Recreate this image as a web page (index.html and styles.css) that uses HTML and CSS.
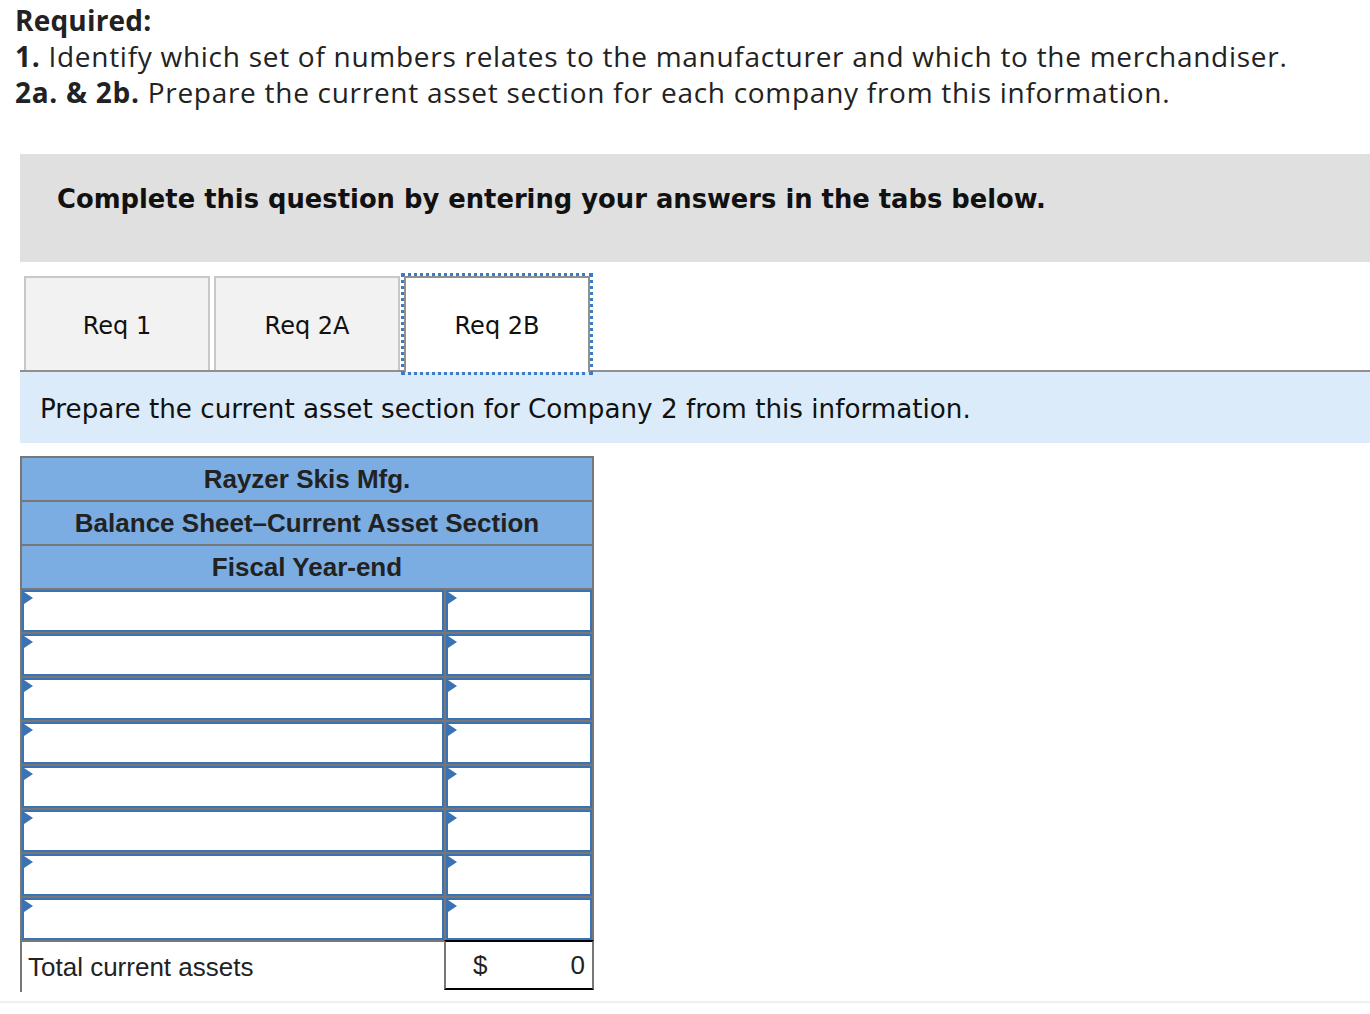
FILE: index.html
```html
<!DOCTYPE html>
<html lang="en">
<head>
<meta charset="utf-8">
<title>Required</title>
<link rel="stylesheet" href="styles.css">
</head>
<body>
<div class="required">
  <div class="req-title">Required:</div>
  <div class="req-line"><b>1.</b> Identify which set of numbers relates to the manufacturer and which to the merchandiser.</div>
  <div class="req-line"><b>2a. &amp; 2b.</b> Prepare the current asset section for each company from this information.</div>
</div>

<div class="instructions">Complete this question by entering your answers in the tabs below.</div>

<div class="tabs">
  <div class="tab">Req 1</div>
  <div class="tab">Req 2A</div>
  <div class="tab tab-active">Req 2B</div>
</div>

<div class="panel">Prepare the current asset section for Company 2 from this information.</div>

<div class="sheet">
  <div class="sheet-head">
    <div class="head-row">Rayzer Skis Mfg.</div>
    <div class="head-row">Balance Sheet–Current Asset Section</div>
    <div class="head-row">Fiscal Year-end</div>
  </div>
  <div class="rows">
    <div class="row"><div class="field"></div><div class="field"></div></div>
    <div class="row"><div class="field"></div><div class="field"></div></div>
    <div class="row"><div class="field"></div><div class="field"></div></div>
    <div class="row"><div class="field"></div><div class="field"></div></div>
    <div class="row"><div class="field"></div><div class="field"></div></div>
    <div class="row"><div class="field"></div><div class="field"></div></div>
    <div class="row"><div class="field"></div><div class="field"></div></div>
    <div class="row"><div class="field"></div><div class="field"></div></div>
  </div>
  <div class="total-row">
    <div class="total-label">Total current assets</div>
    <div class="total-value"><span>$</span><span>0</span></div>
  </div>
</div>

<div class="footer-line"></div>
</body>
</html>
```
FILE: styles.css
```css
html, body {
  margin: 0;
  padding: 0;
  background: #ffffff;
}

body {
  width: 1370px;
  overflow: hidden;
}

.required {
  padding: 2px 0 0 15px;
  font-family: "Open Sans", "Liberation Sans", sans-serif;
  font-size: 28px;
  line-height: 36px;
  letter-spacing: 0.2px;
  color: #222222;
  white-space: nowrap;
}

.req-line {
  letter-spacing: 0.72px;
}

.required b,
.req-title {
  font-weight: 700;
}

.instructions {
  margin: 44px 0 0 20px;
  height: 108px;
  box-sizing: border-box;
  padding: 0 0 18px 37px;
  display: flex;
  align-items: center;
  background: #e0e0e0;
  font-family: "DejaVu Sans", Verdana, sans-serif;
  font-weight: 700;
  font-size: 25.8px;
  color: #111111;
}

.tabs {
  margin-left: 20px;
  padding: 14px 0 0 4px;
  display: flex;
  gap: 4px;
  border-bottom: 2px solid #909090;
}

.tab {
  width: 186px;
  height: 94px;
  box-sizing: border-box;
  border: 2px solid #c8c8c8;
  border-bottom: 0;
  background: #f2f2f2;
  display: flex;
  align-items: center;
  justify-content: center;
  padding-top: 4px;
  font-family: "DejaVu Sans", Verdana, sans-serif;
  font-size: 24px;
  color: #111111;
}

.tab-active {
  background: #ffffff;
  border-color: #909090;
  height: 96px;
  margin-bottom: -2px;
  padding-top: 2px;
  outline: 3px dotted #3d7cc2;
}

.panel {
  margin-left: 20px;
  height: 71px;
  box-sizing: border-box;
  padding: 2px 0 0 20px;
  display: flex;
  align-items: center;
  background: #dbebf9;
  font-family: "DejaVu Sans", Verdana, sans-serif;
  font-size: 26.2px;
  color: #111111;
}

.sheet {
  margin: 13px 0 0 20px;
  width: 574px;
  font-family: "Liberation Sans", Arial, sans-serif;
  color: #222222;
}

.sheet-head {
  border: 2px solid #777777;
  border-bottom: 0;
  background: #7badE3;
}

.head-row {
  height: 42px;
  border-bottom: 2px solid #777777;
  display: flex;
  align-items: center;
  justify-content: center;
  font-weight: 700;
  font-size: 26px;
}

.rows {
  background: #777777;
  border-left: 2px solid #777777;
  border-right: 2px solid #777777;
}

.row {
  display: grid;
  grid-template-columns: 422px 146px;
  column-gap: 2px;
  padding-bottom: 2px;
}

.row:last-child {
  padding-bottom: 0;
}

.field {
  position: relative;
  height: 42px;
  box-sizing: border-box;
  border: 2px solid #3b72b4;
  background: #ffffff;
}

.field::before {
  content: "";
  position: absolute;
  left: 0;
  top: 0;
  width: 0;
  height: 0;
  border-left: 9px solid #3b72b4;
  border-top: 6.5px solid transparent;
  border-bottom: 6.5px solid transparent;
}

.total-row {
  display: grid;
  grid-template-columns: 424px 150px;
  align-items: start;
}

.total-label {
  height: 52px;
  box-sizing: border-box;
  border-left: 2px solid #777777;
  border-top: 2px solid #777777;
  padding: 10px 0 0 6px;
  font-size: 26px;
}

.total-value {
  height: 50px;
  box-sizing: border-box;
  border-top: 2px solid #000000;
  border-bottom: 2px solid #000000;
  border-left: 2px solid #777777;
  border-right: 2px solid #777777;
  padding: 8px 7px 0 27px;
  display: flex;
  justify-content: space-between;
  font-size: 26px;
}

.footer-line {
  margin-top: 9px;
  height: 2px;
  background: #f0f0f0;
}
```
